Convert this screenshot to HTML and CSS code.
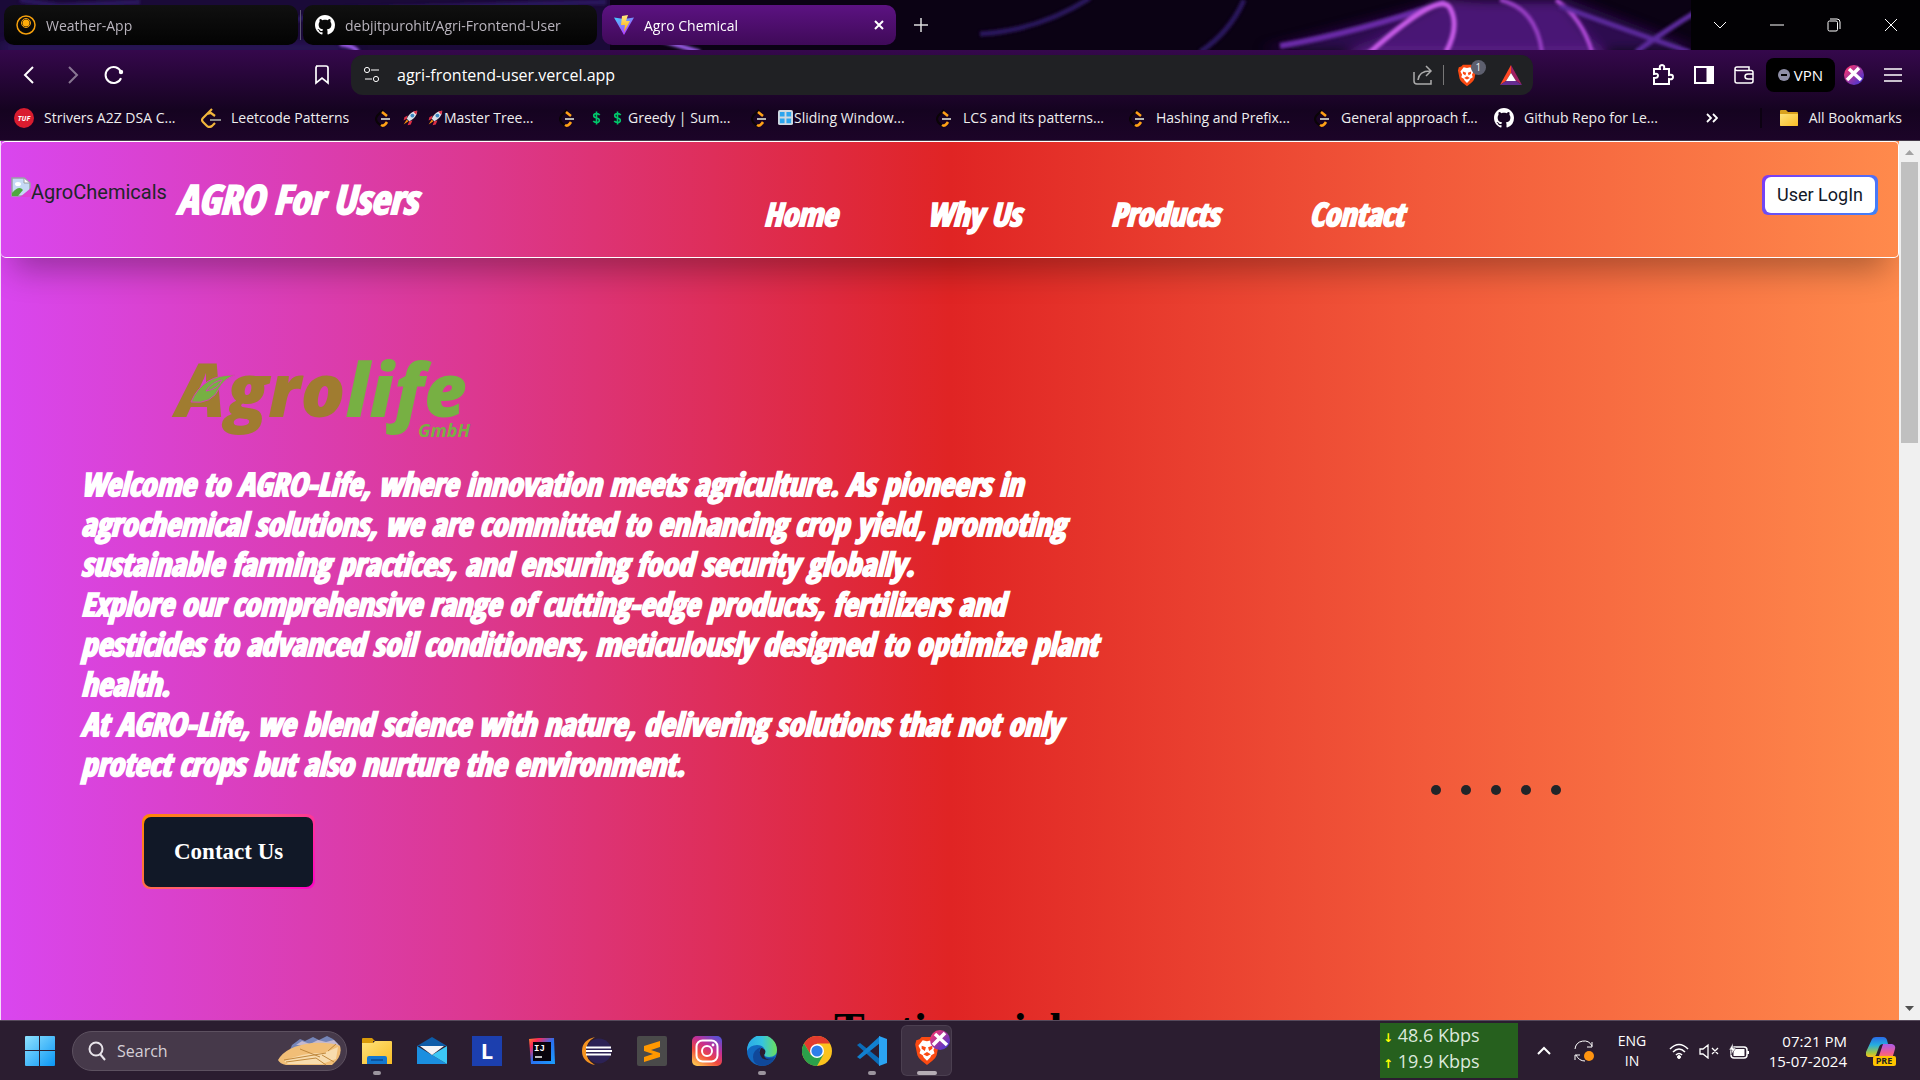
FILE: index.html
```html
<!DOCTYPE html>
<html lang="en">
<head>
<meta charset="utf-8">
<title>Agro Chemical</title>
<link rel="stylesheet" href="styles.css">
</head>
<body>
<svg class="defs" aria-hidden="true">
  <defs>
    <linearGradient id="vite" x1="0" y1="0" x2="0.6" y2="1"><stop offset="0" stop-color="#41d1ff"/><stop offset="1" stop-color="#bd34fe"/></linearGradient>
    <linearGradient id="bolt" x1="0" y1="0" x2="0" y2="1"><stop offset="0" stop-color="#ffea83"/><stop offset="1" stop-color="#ffa800"/></linearGradient>
    <linearGradient id="xg" x1="0" y1="0" x2="1" y2="1"><stop offset="0.2" stop-color="#e0347c"/><stop offset="0.8" stop-color="#5a35c8"/></linearGradient>
    <linearGradient id="win" x1="0" y1="0" x2="1" y2="1"><stop offset="0" stop-color="#8fe2ff"/><stop offset="1" stop-color="#0a96f5"/></linearGradient>
    <linearGradient id="insta" x1="0.2" y1="1" x2="0.8" y2="0"><stop offset="0" stop-color="#fdc04e"/><stop offset="0.35" stop-color="#f0483e"/><stop offset="0.65" stop-color="#c62f94"/><stop offset="1" stop-color="#5b4fd2"/></linearGradient>
    <linearGradient id="edgeTop" x1="0" y1="0.5" x2="1" y2="0.5"><stop offset="0" stop-color="#2aa9e8"/><stop offset="0.5" stop-color="#35c4e0"/><stop offset="1" stop-color="#6be05a"/></linearGradient>
    <linearGradient id="ij" x1="0" y1="0" x2="1" y2="1"><stop offset="0" stop-color="#fc8a2c"/><stop offset="0.2" stop-color="#fe2857"/><stop offset="0.5" stop-color="#2a6ff0"/><stop offset="1" stop-color="#1aa0ff"/></linearGradient>
    <linearGradient id="cop1" x1="0" y1="0" x2="0" y2="1"><stop offset="0" stop-color="#2a6be8"/><stop offset="0.4" stop-color="#25aee0"/><stop offset="0.8" stop-color="#a8c83c"/><stop offset="1" stop-color="#ffc01e"/></linearGradient>
    <linearGradient id="cop2" x1="0" y1="0" x2="0" y2="1"><stop offset="0" stop-color="#a95be8"/><stop offset="0.6" stop-color="#f25b8f"/><stop offset="1" stop-color="#ff8a4a"/></linearGradient>
    <linearGradient id="fold" x1="0" y1="0" x2="1" y2="1"><stop offset="0" stop-color="#ffe27a"/><stop offset="1" stop-color="#f9bd26"/></linearGradient>
    <filter id="soft"><feGaussianBlur stdDeviation="1.6"/></filter>
    <filter id="softer"><feGaussianBlur stdDeviation="6"/></filter>
    <symbol id="github" viewBox="0 0 16 16"><path fill="#fff" d="M8 0C3.58 0 0 3.58 0 8c0 3.54 2.29 6.53 5.47 7.59.4.07.55-.17.55-.38 0-.19-.01-.82-.01-1.49-2.01.37-2.53-.49-2.69-.94-.09-.23-.48-.94-.82-1.13-.28-.15-.68-.52-.01-.53.63-.01 1.08.58 1.23.82.72 1.21 1.87.87 2.33.66.07-.52.28-.87.51-1.07-1.78-.2-3.64-.89-3.64-3.95 0-.87.31-1.59.82-2.15-.08-.2-.36-1.02.08-2.12 0 0 .67-.21 2.2.82.64-.18 1.32-.27 2-.27s1.36.09 2 .27c1.53-1.04 2.2-.82 2.2-.82.44 1.1.16 1.92.08 2.12.51.56.82 1.27.82 2.15 0 3.07-1.87 3.75-3.65 3.95.29.25.54.73.54 1.48 0 1.07-.01 1.93-.01 2.2 0 .21.15.46.55.38A8.01 8.01 0 0 0 16 8c0-4.42-3.58-8-8-8"/></symbol>
    <symbol id="leet" viewBox="0 0 20 20"><path d="M11 2 5 8q-2 3 0 6l5 5" fill="none" stroke="#0a0406" stroke-width="2"/><path d="M10 4l5 4M9 17q3 2 6-3" fill="none" stroke="#ffa116" stroke-width="2.600"/><path d="M9 11h9" stroke="#b3b3b3" stroke-width="2"/></symbol>
    <symbol id="rocket" viewBox="0 0 20 20"><path d="M7 7 3 9l-1 4 4-2zM13 13l-2 5-4 1 2-5z" fill="#dd2e44"/><path d="M19 1c-6 0-11 5-13 10l3 3c5-2 10-7 10-13z" fill="#d8dfe6"/><circle cx="13" cy="7" r="2.4" fill="#3b88c3"/><path d="M19 1l-5 1 4 4z" fill="#dd2e44"/><path d="M6 12l-4 6 6-4z" fill="#f4900c"/></symbol>
    <symbol id="dollar" viewBox="0 0 10 20"><path d="M9 6.500Q8 4.500 5 4.500 1.500 4.500 1.500 7T5 10t3.500 3T5 15.500Q2 15.500 1 13.500M5 2v16" fill="none" stroke="#00c86b" stroke-width="2"/></symbol>
    <symbol id="lion" viewBox="0 0 24 28"><path d="M7 1h10l2 2 3 1 1 4-2 10q-1 3-4 5l-5 4-5-4q-3-2-4-5L1 8l1-4 3-1z" fill="#fb4a12"/><path d="M12 5l4-1 4 5-2 4 1 3-3 2-1 2-3 3-3-3-1-2-3-2 1-3-2-4 4-5z" fill="#fff"/><path d="M7 9l4 1.500-1 3.500-3-2zM17 9l-4 1.500 1 3.500 3-2zM8.500 17l3.500-2 3.500 2-3.500 2z" fill="#fb4a12"/></symbol>
    <symbol id="xball" viewBox="0 0 20 20"><circle cx="10" cy="10" r="10" fill="url(#xg)"/><path d="M5 4 17 15M15 3 3 15" stroke="#fff" stroke-width="3.500"/></symbol>
  </defs>
</svg>

<header class="browser">
  <div class="tabstrip">
    <svg class="wallpaper" viewBox="0 0 1920 50" preserveAspectRatio="none" aria-hidden="true">
      <rect width="1920" height="50" fill="#0b0214"/>
      <rect width="610" height="50" fill="#1a0a38"/>
      <g filter="url(#softer)"><path d="M1340 60 1440 0h120l50 60z" fill="#64208f"/><path d="M1260 50 1420 8l60-8h90l130 50z" fill="#3d1568" opacity=".7"/><path d="M0 46h340l20 4H0z" fill="#4a2a96"/></g>
      <g fill="none" filter="url(#soft)">
        <path d="M340 44q15 2 18 8M660 40q20 6 40 12" stroke="#a060f0" stroke-width="4"/>
        <path d="M980 34q60-4 110-36M1200 52q30-20 44-52M20 0 60 6 140 2M296 20l30-10 280-8" stroke="#2c145e" stroke-width="5"/>
        <path d="M1280 46q80-14 165-44" stroke="#6b2ba8" stroke-width="6"/>
        <path d="M1368 54Q1440-10 1450 8T1446 52" stroke="#c85be8" stroke-width="5"/>
        <path d="M1500 0q36 8 42 52" stroke="#9a3fc6" stroke-width="4"/>
        <path d="M1556 0q26 18 36 52" stroke="#b04ad8" stroke-width="4"/>
        <path d="M1560 6q60 22 130 46M1636 52q30-22 60-40" stroke="#5c2a9c" stroke-width="5"/>
      </g>
    </svg>
    <a class="tab" href="#weather"><svg width="20" height="20" viewBox="0 0 20 20"><circle cx="10" cy="10" r="9" fill="none" stroke="#f5a00c" stroke-width="1.500"/><circle cx="10" cy="8" r="4.500" fill="none" stroke="#f5a00c"/><circle cx="10" cy="8" r="3.500" fill="#ffac0a"/></svg><span>Weather-App</span></a>
    <i class="tab-sep"></i>
    <a class="tab" href="#repo"><svg width="20" height="20"><use href="#github"/></svg><span>debjitpurohit/Agri-Frontend-User</span></a>
    <div class="tab active"><svg width="20" height="20" viewBox="0 0 20 20"><path d="M0 2.500 10 20 20 2.500 10 4z" fill="url(#vite)"/><path d="M8 1l6-1-2 6h4L10 17l1-7H7z" fill="url(#bolt)"/></svg><span>Agro Chemical</span>
      <button class="bare" aria-label="Close tab"><svg width="10" height="10" viewBox="0 0 10 10"><path d="M1 1l8 8M9 1 1 9" stroke="#fff" stroke-width="2"/></svg></button></div>
    <button class="bare newtab" aria-label="New tab"><svg width="14" height="14" viewBox="0 0 14 14"><path d="M7 0v14M0 7h14" stroke="#ddd" stroke-width="1.500"/></svg></button>
    <div class="wincontrols">
      <button class="bare" aria-label="Search tabs"><svg width="14" height="14" viewBox="0 0 14 14"><path d="M1 4l6 6 6-6"/></svg></button>
      <button class="bare" aria-label="Minimize"><svg width="14" height="14" viewBox="0 0 14 14"><path d="M0 7h14"/></svg></button>
      <button class="bare" aria-label="Restore"><svg width="14" height="14" viewBox="0 0 14 14"><rect x="1" y="3" width="9.500" height="10" rx="1.500"/><path d="M3 1h7q3 0 3 3v7"/></svg></button>
      <button class="bare" aria-label="Close"><svg width="14" height="14" viewBox="0 0 14 14"><path d="M1 1l12 12M13 1 1 13"/></svg></button>
    </div>
  </div>

  <div class="toolbar">
    <div class="navbtns">
      <button class="bare" aria-label="Back"><svg width="20" height="20" viewBox="0 0 20 20"><path d="M13 2 5 10l8 8" stroke-width="2"/></svg></button>
      <button class="bare dim" aria-label="Forward"><svg width="20" height="20" viewBox="0 0 20 20"><path d="M7 2l8 8-8 8" stroke-width="2"/></svg></button>
      <button class="bare" aria-label="Reload"><svg width="20" height="20" viewBox="0 0 20 20"><path d="M17 13a8 8 0 1 1 0-6" stroke-width="2"/><circle cx="17" cy="7" r="2.200" fill="#fff" stroke="none"/></svg></button>
    </div>
    <button class="bare" aria-label="Bookmark this page"><svg width="20" height="20" viewBox="0 0 20 20"><path d="M4 1h10q2 0 2 2v15l-6-5-6 5V3q0-2 2-2" stroke-width="1.700"/></svg></button>
    <div class="urlbar">
      <svg width="18" height="18" viewBox="0 0 18 18"><circle cx="4" cy="4" r="2.600"/><path d="M8 4h8M2 13h7"/><circle cx="13" cy="13" r="2.600"/></svg>
      <input type="text" value="agri-frontend-user.vercel.app" aria-label="Address">
      <svg width="20" height="20" viewBox="0 0 20 20"><path d="M1 7v9q0 3 3 3h14v-4M5 15q1-9 12-9M13 1l5 5-5 5" stroke="#aaa" stroke-width="1.500"/></svg>
      <i></i>
      <span class="shield"><svg class="solid" width="20" height="23"><use href="#lion"/></svg><b>1</b></span>
      <svg class="solid" width="22" height="20" viewBox="0 0 22 20"><path d="M11 0 0 20l6-4 5-8z" fill="#ff4724"/><path d="M11 0v8l5 8 6 4z" fill="#9e1f63"/><path d="M0 20h22l-6-4H6z" fill="#662d91"/><path d="M11 8l5 8H6z" fill="#fff"/></svg>
    </div>
    <div class="tools">
      <button class="bare" aria-label="Extensions"><svg width="22" height="22" viewBox="0 0 22 22"><path d="M2 5h6q-1-4 2-4t2 4h5v6q4-1 4 2t-4 2v5H2v-6q4 0 4-2.500T2 10z" stroke-width="2"/></svg></button>
      <button class="bare" aria-label="Sidebar"><svg width="20" height="20" viewBox="0 0 20 20"><path d="M1 2h18v16H1z" stroke-width="2"/><path d="M13 2h6v16h-6z" fill="#fff"/></svg></button>
      <button class="bare" aria-label="Wallet"><svg width="20" height="20" viewBox="0 0 20 20"><path d="M1 4q0-2 2-2h12v3M1 4q0 1.500 2 1.500h14q2 0 2 2V16q0 2-2 2H3q-2 0-2-2zM19 9h-5q-3 0-3 2.500t3 2.500h5" stroke-width="1.500"/></svg></button>
      <button class="vpn"><svg class="solid" width="12" height="12" viewBox="0 0 12 12"><circle cx="6" cy="6" r="6" fill="#8e8ea6"/><path d="M3 5h6v2H3z" fill="#000"/></svg>VPN</button>
      <svg class="solid" width="20" height="20"><use href="#xball"/></svg>
      <button class="bare" aria-label="Menu"><svg width="18" height="14" viewBox="0 0 18 14"><path d="M0 1h18M0 7h18M0 13h18" stroke-width="1.500"/></svg></button>
    </div>
  </div>

  <nav class="bookmarks" aria-label="Bookmarks">
    <a href="#b1"><svg width="20" height="20" viewBox="0 0 20 20"><circle cx="10" cy="10" r="10" fill="#d91c2f"/><text x="10" y="13" text-anchor="middle" class="tuf">TUF</text></svg>Strivers A2Z DSA C...</a>
    <a href="#b2"><svg width="20" height="20" viewBox="0 0 20 20"><path d="M11 1 2 10q-2 2 0 4l4 4q2 2 5 0l3-3M6 6l4-1 4 3" fill="none" stroke="#f2b63c" stroke-width="2.200"/><path d="M9 12h11" stroke="#8a8a8a" stroke-width="2"/></svg>Leetcode Patterns</a>
    <a href="#b3"><svg width="20" height="20"><use href="#leet"/></svg><span class="emoji"><svg width="16" height="16"><use href="#rocket"/></svg><svg width="16" height="16"><use href="#rocket"/></svg></span>Master Tree...</a>
    <a href="#b4"><svg width="20" height="20"><use href="#leet"/></svg><span class="emoji money"><svg width="9" height="16"><use href="#dollar"/></svg><svg width="9" height="16"><use href="#dollar"/></svg></span>Greedy | Sum...</a>
    <a href="#b5"><svg width="20" height="20"><use href="#leet"/></svg><span class="emoji"><svg width="15" height="15" viewBox="0 0 16 16"><rect width="16" height="16" rx="2" fill="#cfd8e0"/><path d="M2 2h5v5H2zM9 2h5v5H9zM2 9h5v5H2zM9 9h5v5H9z" fill="#2ba5ee"/></svg></span>Sliding Window...</a>
    <a href="#b6"><svg width="20" height="20"><use href="#leet"/></svg>LCS and its patterns...</a>
    <a href="#b7"><svg width="20" height="20"><use href="#leet"/></svg>Hashing and Prefix...</a>
    <a href="#b8"><svg width="20" height="20"><use href="#leet"/></svg>General approach f...</a>
    <a href="#b9"><svg width="20" height="20"><use href="#github"/></svg>Github Repo for Le...</a>
    <button class="bare" aria-label="More bookmarks"><svg width="12" height="10" viewBox="0 0 12 10"><path d="M1 1l4 4-4 4M7 1l4 4-4 4" stroke="#fff" stroke-width="1.800"/></svg></button>
    <a class="all" href="#all"><svg width="20" height="20" viewBox="0 0 20 20"><path d="M1 3q0-1 1-1h5l2 2h9q1 0 1 1v12q0 1-1 1H2q-1 0-1-1z" fill="#d9a11d"/><path d="M1 6h18v11q0 1-1 1H2q-1 0-1-1z" fill="url(#fold)"/></svg>All Bookmarks</a>
  </nav>
</header>

<div class="viewport">
  <main class="page">
    <nav class="sitenav">
      <div class="brand">
        <span class="broken"><svg width="20" height="20" viewBox="0 0 20 20"><path d="M1 1h12l6 5v13H1z" fill="#c5d9f5" stroke="#9aa0a6" stroke-width="1.500"/><path d="M13 1v5h6z" fill="#fff" stroke="#9aa0a6"/><ellipse cx="7" cy="7" rx="3" ry="2" fill="#fff"/><path d="M1 19v-3q7-8 11-3l-5 6z" fill="#4fa83d"/><path d="M9 20 20 11v9z" fill="#dd40d4"/></svg>AgroChemicals</span>
        <h1>AGRO For Users</h1>
      </div>
      <ul>
        <li><a href="#home">Home</a></li><li><a href="#why">Why Us</a></li><li><a href="#products">Products</a></li><li><a href="#contact">Contact</a></li>
      </ul>
      <button class="login"><span>User LogIn</span></button>
    </nav>
    <section class="hero">
      <div>
        <svg class="logo" width="320" height="100" viewBox="0 0 320 100" role="img" aria-label="Agrolife GmbH">
          <text x="7" y="69" class="logo-name"><tspan fill="#a07c30">Agro</tspan><tspan fill="#77b043">life</tspan></text>
          <text x="249" y="89" class="logo-sub">GmbH</text>
          <path d="M22 54Q34 26 66 27 55 31 51 39 43 57 22 54z" fill="#77b043" stroke="#db3cb8"/>
          <path d="M37 43q7-10 16-11-4 9-16 11" fill="none" stroke="#db3cb8"/>
        </svg>
        <p>Welcome to AGRO-Life, where innovation meets agriculture. As pioneers in<br>agrochemical solutions, we are committed to enhancing crop yield, promoting<br>sustainable farming practices, and ensuring food security globally.<br>Explore our comprehensive range of cutting-edge products, fertilizers and<br>pesticides to advanced soil conditioners, meticulously designed to optimize plant<br>health.<br>At AGRO-Life, we blend science with nature, delivering solutions that not only<br>protect crops but also nurture the environment.</p>
        <button class="contact"><span>Contact Us</span></button>
      </div>
      <div class="dots"><i></i><i></i><i></i><i></i><i></i></div>
    </section>
    <h2>Testimonials</h2>
  </main>
  <div class="scrollbar" aria-hidden="true"><svg width="9" height="5"><path d="M0 5 4.500 0 9 5z" fill="#a3a3a3"/></svg><i></i><svg width="9" height="5"><path d="M0 0h9L4.500 5z" fill="#505050"/></svg></div>
</div>

<footer class="taskbar">
  <button class="bare start" aria-label="Start"><svg width="30" height="30" viewBox="0 0 30 30"><path d="M0 1q0-1 1-1h13v14H0zM15 0h14q1 0 1 1v13H15zM0 15h14v15H1q-1 0-1-1zM15 15h15v14q0 1-1 1H15z" fill="url(#win)"/></svg></button>
  <label class="search"><svg width="20" height="20" viewBox="0 0 20 20"><circle cx="9" cy="8" r="6.500" fill="none" stroke="#e8e4ea" stroke-width="2"/><path d="M13 13l5 6" stroke="#e8e4ea" stroke-width="2"/></svg><input type="text" placeholder="Search">
    <svg width="64" height="30" viewBox="0 0 64 30"><path d="M14 9l8-6 5 2 8-4 6 3 8-4 6 3 5 5v6H12z" fill="#7585b8"/><path d="M18 9l6-4 8 3 8-4 8 2 8-2 6 6z" fill="#c4b9cf"/><path d="M0 24Q8 10 34 7q18-1 28 3 3 10-8 19H8Q2 28 0 24z" fill="#f1be77"/><path d="M6 25q20-9 40-8l14-6-2 12-14 5H10z" fill="#f8dcae"/><path d="M6 24l42-7M8 26l30-4 10 7M22 13l20 8M44 19l12 7M50 15l8-7" fill="none" stroke="#c0883c"/></svg>
  </label>
  <div class="apps">
    <button class="bare running" aria-label="File Explorer"><svg width="30" height="30" viewBox="0 0 30 30"><path d="M0 3q0-1 1-1h9l3 3h-2v5H0z" fill="#d99a0a"/><path d="M0 7h11l2-2h16q1 0 1 1v22H0z" fill="url(#fold)"/><path d="M5 28v-6q0-2 2-2h16q2 0 2 2v6z" fill="#1478d0"/><path d="M9 24h12" stroke="#0a4a92" stroke-width="1.500"/></svg></button>
    <button class="bare" aria-label="Mail"><svg width="30" height="30" viewBox="0 0 30 30"><path d="M0 10 15 1l15 9z" fill="#0d5ca8"/><path d="M0 10l30 18H0z" fill="#1b8fe0"/><path d="M30 10 15 19l15 9z" fill="#3cc8f5"/><path d="M3 10h24L15 19z" fill="#f2f4f6"/></svg></button>
    <button class="bare" aria-label="L"><svg width="30" height="30" viewBox="0 0 30 30"><rect width="30" height="30" fill="#1c3fae"/><text x="15" y="23" text-anchor="middle" class="el">L</text></svg></button>
    <button class="bare" aria-label="IntelliJ IDEA"><svg width="30" height="30" viewBox="0 0 30 30"><path d="M2 3 12 2h15l1 26H4z" fill="url(#ij)"/><rect x="6" y="6" width="18" height="19" fill="#08040c"/><text x="7" y="15" class="ijt">IJ</text><path d="M8 21h7" stroke="#fff" stroke-width="1.500"/></svg></button>
    <button class="bare" aria-label="Eclipse"><svg width="30" height="30" viewBox="0 0 30 30"><path d="M13 1Q0 4 0 15t13 14Q4 24 4 15T13 1" fill="#f59320"/><circle cx="17" cy="15" r="12.500" fill="#2c2255"/><path d="M4 11.500h25M4 15h26M4 18.500h25" stroke="#fff" stroke-width="2"/></svg></button>
    <button class="bare" aria-label="Sublime Text"><svg width="30" height="30" viewBox="0 0 30 30"><rect width="30" height="30" rx="2" fill="#4a4a4a"/><path d="M7 10l16-5v6l-9 3 9 3v4L7 26v-5l9-3-9-3z" fill="#ff9800"/></svg></button>
    <button class="bare" aria-label="Instagram"><svg width="30" height="30" viewBox="0 0 30 30"><rect width="30" height="30" rx="5" fill="url(#insta)"/><rect x="4.500" y="4.500" width="21" height="21" rx="6" fill="none" stroke="#fff" stroke-width="2"/><circle cx="15" cy="15" r="5" fill="none" stroke="#fff" stroke-width="2"/><circle cx="21" cy="9" r="1.400" fill="#fff"/></svg></button>
    <button class="bare running" aria-label="Edge"><svg width="30" height="30" viewBox="0 0 30 30"><circle cx="15" cy="15" r="15" fill="#1269c0"/><path d="M0 14A15 15 0 0 1 30 14q0 7-8 7-5 0-5-3 2-2 1-4-2-5-8-5-7 0-10 6" fill="url(#edgeTop)"/><path d="M17 18q0 4 5 4 3 0 6-1-4 9-13 9-9-1-9-9 0-7 8-10-4 6 3 7" fill="#10489a"/><path d="M17 19q2-2 1-5-2-2-4-2-3 5 1 10 4 3 9 1-7 1-7-4" fill="#2a1c30"/></svg></button>
    <button class="bare" aria-label="Chrome"><svg width="30" height="30" viewBox="0 0 30 30"><circle cx="15" cy="15" r="15" fill="#fcc31e"/><path d="M2 7.500A15 15 0 0 1 28 7.500H15L9 19z" fill="#e33b2e"/><path d="M2 7.500A15 15 0 0 0 15 30l6.500-11.500L9 19z" fill="#2ba14b"/><circle cx="15" cy="15" r="7" fill="#fff"/><circle cx="15" cy="15" r="5.600" fill="#2f7de9"/></svg></button>
    <button class="bare running" aria-label="Visual Studio Code"><svg width="30" height="30" viewBox="0 0 30 30"><path d="M0 9l3-2 20 16v7z" fill="#0a6cb8"/><path d="M0 21l3 2L23 7V0z" fill="#1180cf"/><path d="M22 0l8 3v24l-8 3z" fill="#2ba4f3"/></svg></button>
    <button class="bare current" aria-label="Brave"><svg width="26" height="30"><use href="#lion"/></svg><svg class="badge" width="20" height="20"><use href="#xball"/></svg></button>
  </div>
  <div class="speed"><span><b>↓</b> 48.6 Kbps</span><span><b>↑</b> 19.9 Kbps</span></div>
  <div class="tray">
    <svg width="14" height="10" viewBox="0 0 14 10"><path d="M1 8l6-6 6 6" stroke-width="2"/></svg>
    <svg width="22" height="22" viewBox="0 0 22 22"><path d="M2 9a9 9 0 0 1 17-3M19 2v5h-5M2 20v-5h5M3 15q3 6 9 6"/><circle cx="16" cy="16" r="5" fill="#ff9410" stroke="none"/></svg>
    <div class="lang">ENG<br>IN</div>
    <svg width="20" height="16" viewBox="0 0 20 16"><path d="M1 6q9-9 18 0M4 9q6-6 12 0M7 12q3-3 6 0" stroke-width="1.600"/><circle cx="10" cy="14" r="1.500" fill="#fff"/></svg>
    <svg width="20" height="16" viewBox="0 0 20 16"><path d="M1 6h3l5-4v13l-5-4H1zM13 5l6 6M19 5l-6 6" stroke-width="1.300"/></svg>
    <svg width="20" height="16" viewBox="0 0 20 16"><rect x="2" y="4" width="16" height="11" rx="3" stroke-width="1.500"/><rect x="5" y="6.500" width="10" height="6" fill="#fff"/><path d="M19 8v3" stroke-width="2"/><path d="M4 0 0 7h3l-1 5 5-7H4z" fill="#fff" stroke="#2b1d30" stroke-width="0.500"/></svg>
    <div class="clock">07:21 PM<br>15-07-2024</div>
    <svg class="solid" width="30" height="30" viewBox="0 0 30 30"><path d="M6 3q1-2 4-2h7q3 0 4 3l1 4h-5q-3 0-4 3l-3 8q-1 2-3 2H2q-3-1-2-5z" fill="url(#cop1)"/><path d="M17 8h9q4 1 3 5l-3 10H12z" fill="url(#cop2)"/><rect x="7" y="20" width="23" height="10" rx="2" fill="#ffc400"/><text x="18" y="28" text-anchor="middle" class="pre">PRE</text></svg>
  </div>
</footer>
</body>
</html>
```
FILE: styles.css
```css
* { box-sizing: border-box; }
body {
  margin: 0;
  height: 100vh;
  display: flex;
  flex-direction: column;
  overflow: hidden;
  font-family: "Open Sans", "Noto Sans", sans-serif;
  font-size: 14px;
  color: #eee;
}
svg { flex: none; }
a { color: inherit; text-decoration: none; }
button { font: inherit; color: inherit; cursor: pointer; }
.defs { position: absolute; width: 0; height: 0; }
.bare {
  display: flex;
  align-items: center;
  justify-content: center;
  padding: 0;
  border: 0;
  background: none;
}

/* browser chrome */
.browser { background: linear-gradient(#35084c 50px, #150320 110px, #1c0428); border-bottom: 1px solid #443a48; }
.tabstrip { position: relative; z-index: 0; display: flex; align-items: center; height: 50px; padding-left: 4px; }
.wallpaper { position: absolute; inset: 0; width: 100%; height: 100%; z-index: -1; }
.tab {
  display: flex;
  align-items: center;
  gap: 10px;
  width: 294px;
  height: 40px;
  padding: 0 12px;
  border-radius: 10px;
  background: linear-gradient(#101010, #030303);
  color: #b9b4bd;
}
.tab.active { background: linear-gradient(#5c1282, #3f0a58); color: #fff; margin-left: 5px; }
.tab .bare { margin-left: auto; }
.tab-sep { width: 1px; height: 30px; margin: 0 2px; background: #5b5370; }
.newtab { margin-left: 18px; }
.wincontrols { display: grid; grid-template-columns: repeat(4, 57px); height: 100%; margin-left: auto; padding-right: 1px; background: #020104; }
.wincontrols svg, .toolbar svg { fill: none; stroke: #fff; }
.toolbar .solid, .tray .solid { stroke: none; }
.toolbar { display: flex; align-items: center; height: 50px; padding: 0 18px 0 20px; }
.navbtns { display: flex; gap: 22px; margin-right: 188px; }
.dim { opacity: .45; }
.urlbar {
  flex: 1;
  display: flex;
  align-items: center;
  gap: 10px;
  height: 40px;
  margin-left: 19px;
  padding: 0 11px 0 12px;
  border-radius: 12px;
  background: #202124;
}
.urlbar input { flex: 1; min-width: 0; margin-left: 6px; padding: 0; border: 0; outline: 0; background: none; color: #fff; font: 16px "Open Sans", sans-serif; }
.urlbar i { width: 1px; height: 20px; background: #777; }
.shield { position: relative; display: flex; margin: 0 13px 0 3px; }
.shield b { position: absolute; left: 14px; top: -4px; width: 15px; height: 15px; border-radius: 8px; background: #5d5f6e; font: 10px/15px "Open Sans", sans-serif; text-align: center; }
.tools { display: flex; align-items: center; gap: 20px; margin-left: 119px; }
.vpn { display: flex; align-items: center; gap: 4px; height: 34px; margin: 0 -11px 0 -8px; padding: 0 12px; border: 0; border-radius: 8px; background: #000; color: #fff; font-size: 15px; }
.bookmarks {
  display: grid;
  grid-template-columns: 187px 171px 184px 192px 185px 193px 185px 183px 1fr 54px 160px;
  align-items: center;
  height: 40px;
  padding: 0 0 5px 14px;
}
.bookmarks a { display: flex; align-items: center; gap: 10px; white-space: nowrap; }
.emoji { display: flex; gap: 9px; margin-right: -9px; }
.money { gap: 12px; margin: 0 -4px 0 6px; }
.bookmarks .bare { justify-content: flex-start; }
.bookmarks .bare svg { fill: none; }
.bookmarks .all { justify-content: flex-end; padding-right: 18px; border-left: 2px solid #0c0212; }
.tuf { font: italic bold 7px "Open Sans", sans-serif; fill: #fff; }

/* web page */
.viewport { flex: 1; min-height: 0; display: flex; background: #f0f0f0; }
.page {
  flex: 1;
  overflow: hidden;
  border-left: 1px solid #f4dcf8;
  background: linear-gradient(90deg, #d946ef, #dc3890 25%, #e02424 50%, #f2593a 75%, #ff8a4c);
}
.scrollbar { display: flex; flex-direction: column; align-items: center; width: 21px; padding: 9px 2px 9px; }
.scrollbar i { width: 17px; height: 281px; margin: 7px 0 auto; background: #c0c0c0; }
.sitenav {
  display: flex;
  justify-content: space-between;
  align-items: flex-start;
  min-height: 117px;
  padding: 33px 20px 0 10px;
  border: 1px solid #fff;
  border-left: 0;
  border-radius: 5px;
  box-shadow: 0 24px 32px -12px rgba(0, 0, 0, .3);
}
.brand { display: flex; gap: 10px; font-family: Roboto, sans-serif; font-size: 20px; color: #212529; }
.broken { display: flex; padding-top: 2px; line-height: 30px; }
.brand h1, .sitenav ul, .hero p { margin: 0; font-family: "Open Sans Condensed", "Open Sans", sans-serif; font-weight: 700; font-style: italic; color: #fff; -webkit-text-stroke: 2px #fff; }
.brand h1 { font-size: 40px; line-height: 48px; }
.sitenav ul { display: flex; gap: 90px; padding: 19px 12px 0 0; list-style: none; font-size: 32px; line-height: 40px; }
.login { padding: 2px 3px; border: 0; border-radius: 6px; background: linear-gradient(135deg, #7e3af2, #3f83f8); font-family: Roboto, sans-serif; font-size: 18px; font-weight: 400; }
.login span { display: block; padding: 0 12px; border-radius: 6px; background: #fff; color: #111827; line-height: 36px; }
.hero { display: flex; justify-content: space-between; padding: 90px 28px 0 80px; }
.logo { display: block; margin: 0 0 16px 88px; }
.logo-name { font: italic 800 74px "Open Sans", sans-serif; }
.logo-sub { font: italic bold 18px "Open Sans", sans-serif; fill: #77b043; }
.hero p { font-size: 32px; line-height: 40px; white-space: nowrap; }
.contact { margin: 30px 0 0 61px; padding: 3px 2px 2px; border: 0; border-radius: 8px; background: linear-gradient(135deg, #ff8a00, #ff5a78 50%, #ff00c8); font: bold 23px "Liberation Serif", serif; }
.contact span { display: block; padding: 0 30px; border-radius: 7px; background: #111827; color: #fff; line-height: 70px; }
.dots { display: flex; justify-content: center; gap: 20px; width: 750px; padding-top: 437px; }
.dots i { width: 10px; height: 10px; border-radius: 50%; background: #212529; }
.page h2 { margin: 111px 0 0; padding-left: 14px; text-align: center; color: #000; font: bold 46px/60px "Liberation Serif", serif; }

/* taskbar */
.taskbar { display: flex; align-items: center; height: 60px; border-top: 1px solid #574a5c; background: #2b1d30; }
.start { margin: 0 17px 0 25px; }
.search { display: flex; align-items: center; gap: 10px; width: 275px; height: 40px; padding: 0 4px 0 14px; border: 1px solid #5d5160; border-radius: 20px; background: #46394a; }
.search input { flex: 1; min-width: 0; padding: 0; border: 0; outline: 0; background: none; font: 16px "Open Sans", sans-serif; }
.search input::placeholder { color: #d5d0d7; opacity: 1; }
.apps { display: flex; gap: 6px; margin-left: 5px; }
.apps .bare { position: relative; width: 49px; height: 49px; border-radius: 5px; }
.apps .running::after, .apps .current::after { content: ""; position: absolute; bottom: 0; width: 8px; height: 4px; border-radius: 2px; background: #9b949e; }
.apps .current { background: #3d3042; box-shadow: 0 0 0 1px #4b3f50; }
.apps .current::after { width: 20px; background: #b5adb5; }
.badge { position: absolute; right: 1px; top: 4px; }
.el { font: bold 22px "Open Sans", sans-serif; fill: #fff; }
.ijt { font: bold 9px "Liberation Mono", monospace; fill: #fff; }
.speed { display: grid; width: 138px; margin-left: auto; padding: 1px 3px 2px; background: #26601e; font-size: 18px; line-height: 23px; color: #dce8dc; }
.speed b { color: #ff0; font-family: "DejaVu Sans", sans-serif; font-size: 12px; }
.tray { display: flex; align-items: center; gap: 10px; margin-left: 19px; padding-right: 24px; line-height: 20px; color: #fff; }
.tray svg { fill: none; stroke: #fff; }
.tray svg:first-child { margin-right: 12px; }
.lang { width: 54px; text-align: center; }
.clock { width: 88px; margin-right: 9px; text-align: right; font-size: 15px; }
.pre { font: bold 9px "Open Sans", sans-serif; fill: #222; }
```
